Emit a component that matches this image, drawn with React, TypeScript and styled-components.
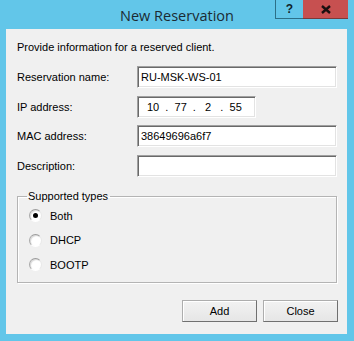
import React from "react";
import styled, { createGlobalStyle } from "styled-components";

const GlobalStyle = createGlobalStyle`
  html, body {
    margin: 0;
    padding: 0;
    background: #62c6e9;
  }
  * { box-sizing: border-box; }
`;

const Window = styled.div`
  width: 354px;
  height: 341px;
  background: #62c6e9;
  display: flex;
  flex-direction: column;
  font-family: "Liberation Sans", Arial, sans-serif;
  font-size: 11px;
  color: #000;
`;

const TitleBar = styled.div`
  height: 29px;
  position: relative;
  display: flex;
  align-items: center;
  justify-content: center;
`;

const Title = styled.div`
  font-family: "Open Sans", "Noto Sans", sans-serif;
  font-size: 14.5px;
  color: #1b2b33;
  padding-top: 1px;
`;

const Controls = styled.div`
  position: absolute;
  top: 0;
  right: 6px;
  display: flex;
  height: 19px;
`;

const HelpButton = styled.div`
  width: 28px;
  height: 19px;
  border: 1px solid #2c6f87;
  border-top: none;
  border-right: none;
  background: #62c6e9;
  display: flex;
  align-items: center;
  justify-content: center;
  font-family: "Liberation Sans", Arial, sans-serif;
  font-weight: bold;
  font-size: 12px;
  color: #10232b;
`;

const CloseButton = styled.div`
  width: 45px;
  height: 19px;
  background: #c75050;
  border-bottom: 1px solid #7a3a3a;
  display: flex;
  align-items: center;
  justify-content: center;
`;

const Panel = styled.div`
  margin: 0 7px 7px 6px;
  flex: 1;
  background: #f0f0f0;
  padding: 11px 9px 12px 11px;
  display: flex;
  flex-direction: column;
`;

const Intro = styled.div`
  line-height: 14px;
`;

const Form = styled.div`
  margin-top: 12px;
  display: grid;
  grid-template-columns: 120px 200px;
  grid-auto-rows: 22px;
  row-gap: 7.5px;
  align-items: center;
`;

const Label = styled.div`
  line-height: 14px;
`;

const TextBox = styled.div<{ $width?: number }>`
  width: ${(p) => (p.$width ? `${p.$width}px` : "100%")};
  height: 22px;
  background: #fff;
  border-top: 1px solid #a0a0a0;
  border-left: 1px solid #a0a0a0;
  border-bottom: 1px solid #ffffff;
  border-right: 1px solid #ffffff;
  box-shadow: inset 1px 1px 0 #696969, inset -1px -1px 0 #e3e3e3;
  padding: 2px 0 0 3px;
  line-height: 16px;
  white-space: pre;
`;

const IpText = styled.span`
  padding-left: 6px;
`;

const Group = styled.fieldset`
  margin: 13px 1px 0 0;
  padding: 0 0 0 11px;
  height: 93px;
  border: 1px solid #b4b4b4;
  box-shadow: inset 1px 1px 0 #fff, 1px 1px 0 #fff;
  display: flex;
  flex-direction: column;
`;

const Legend = styled.legend`
  padding: 0 2px 0 1px;
  margin-left: -2px;
  line-height: 13px;
`;

const RadioRow = styled.label<{ $first?: boolean }>`
  display: flex;
  align-items: center;
  height: 14px;
  margin-top: ${(p) => (p.$first ? "6px" : "10.5px")};
  gap: 8px;
`;

const RadioCircle = styled.span<{ $checked?: boolean }>`
  width: 13px;
  height: 13px;
  border-radius: 50%;
  background: radial-gradient(circle at 60% 60%, #ffffff 45%, #e6e6e6 100%);
  border: 1px solid;
  border-color: #9c9c9c #e8e8e8 #ffffff #a8a8a8;
  box-shadow: inset 1px 1px 0 #dcdcdc;
  display: flex;
  align-items: center;
  justify-content: center;
  &::after {
    content: "";
    width: 5px;
    height: 5px;
    border-radius: 50%;
    background: #000;
    display: ${(p) => (p.$checked ? "block" : "none")};
  }
`;

const Footer = styled.div`
  margin-top: auto;
  display: flex;
  justify-content: flex-end;
  gap: 6px;
`;

const Button = styled.div`
  width: 75px;
  height: 22px;
  background: linear-gradient(#f2f2f2, #e6e6e6);
  border: 1px solid #adadad;
  border-bottom-color: #707070;
  border-right-color: #707070;
  box-shadow: inset 1px 1px 0 #ffffff;
  display: flex;
  align-items: center;
  justify-content: center;
  padding-bottom: 1px;
`;

const CloseIcon = () => (
  <svg width="10" height="9" viewBox="0 0 10 9">
    <path d="M1 1 L9 8 M9 1 L1 8" stroke="#1a1010" strokeWidth="2.4" />
  </svg>
);

export default function App() {
  return (
    <>
      <GlobalStyle />
      <Window>
        <TitleBar>
          <Title>New Reservation</Title>
          <Controls>
            <HelpButton>?</HelpButton>
            <CloseButton>
              <CloseIcon />
            </CloseButton>
          </Controls>
        </TitleBar>
        <Panel>
          <Intro>Provide information for a reserved client.</Intro>
          <Form>
            <Label>Reservation name:</Label>
            <TextBox>RU-MSK-WS-01</TextBox>
            <Label>IP address:</Label>
            <TextBox $width={119}>
              <IpText>{"10  .  77  .   2   .  55"}</IpText>
            </TextBox>
            <Label>MAC address:</Label>
            <TextBox>38649696a6f7</TextBox>
            <Label>Description:</Label>
            <TextBox />
          </Form>
          <Group>
            <Legend>Supported types</Legend>
            <RadioRow $first>
              <RadioCircle $checked />
              Both
            </RadioRow>
            <RadioRow>
              <RadioCircle />
              DHCP
            </RadioRow>
            <RadioRow>
              <RadioCircle />
              BOOTP
            </RadioRow>
          </Group>
          <Footer>
            <Button>Add</Button>
            <Button>Close</Button>
          </Footer>
        </Panel>
      </Window>
    </>
  );
}
